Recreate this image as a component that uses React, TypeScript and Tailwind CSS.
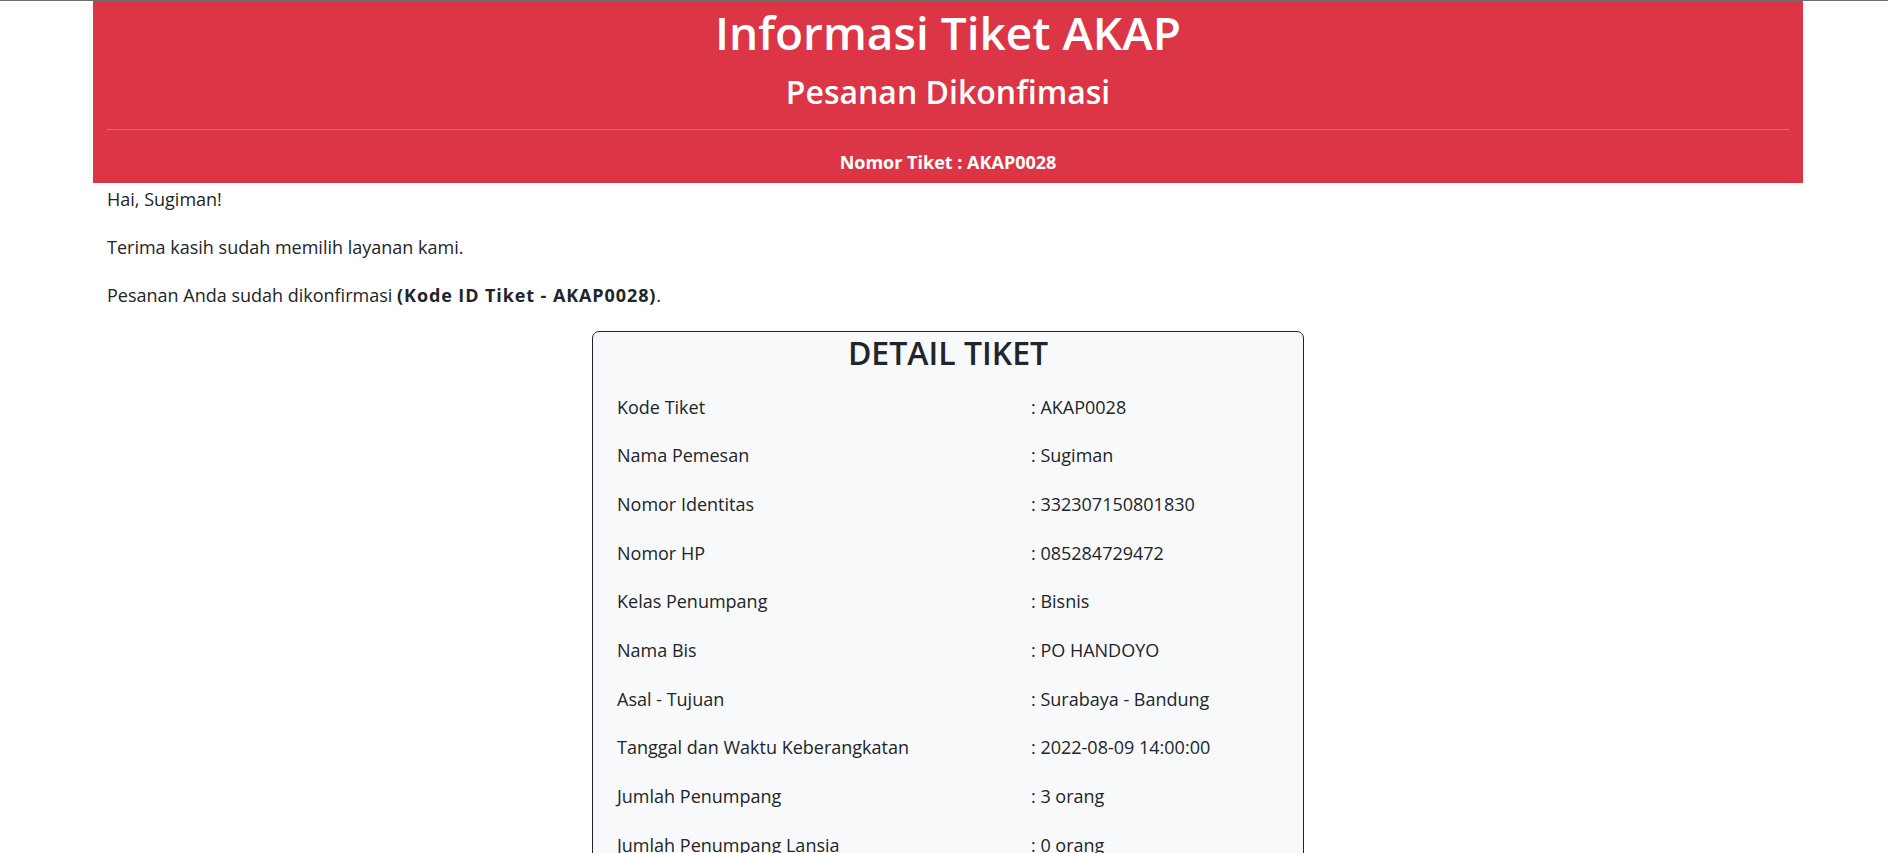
import React from 'react';

const details: [string, string][] = [
  ['Kode Tiket', 'AKAP0028'],
  ['Nama Pemesan', 'Sugiman'],
  ['Nomor Identitas', '332307150801830'],
  ['Nomor HP', '085284729472'],
  ['Kelas Penumpang', 'Bisnis'],
  ['Nama Bis', 'PO HANDOYO'],
  ['Asal - Tujuan', 'Surabaya - Bandung'],
  ['Tanggal dan Waktu Keberangkatan', '2022-08-09 14:00:00'],
  ['Jumlah Penumpang', '3 orang'],
  ['Jumlah Penumpang Lansia', '0 orang'],
];

const App: React.FC = () => {
  return (
    <div className="min-h-screen bg-white text-[#212529] font-['Open_Sans','Noto_Sans',sans-serif]">
      {/* thin window edge */}
      <div className="h-px bg-[#6e6e6e]" />

      <div className="ml-[93px] w-[1710px]">
        {/* Header */}
        <div className="bg-[#dc3545] px-[14px] pt-[3px] pb-[7px] text-center text-white">
          <h1 className="text-[46px] leading-[56px] font-semibold">Informasi Tiket AKAP</h1>
          <h2 className="mt-[10px] text-[32px] leading-[44px] font-semibold">Pesanan Dikonfimasi</h2>
          <div className="mt-[15px] h-px bg-[#e56874]" />
          <p className="mt-[18px] text-[18px] leading-[28px] font-bold">Nomor Tiket : AKAP0028</p>
        </div>

        {/* Body */}
        <div className="px-[14px] pt-[2px] text-[18px] leading-[29px]">
          <p className="mb-[19px]">Hai, Sugiman!</p>
          <p className="mb-[19px]">Terima kasih sudah memilih layanan kami.</p>
          <p className="mb-[21px]">
            Pesanan Anda sudah dikonfirmasi{' '}
            <span className="font-bold tracking-[0.9px]">(Kode ID Tiket - AKAP0028)</span>.
          </p>

          <div className="mx-auto w-[712px] rounded-[7px] border border-[#212529] bg-[#f8f9fa] pt-[1px] pb-[24px]">
            <h3 className="text-center text-[32px] leading-[40px] font-semibold">DETAIL TIKET</h3>
            <div className="mt-[19.5px] pl-[24px]">
              {details.map(([label, value]) => (
                <div key={label} className="grid grid-cols-[414px_1fr] mb-[19.7px] leading-[29px]">
                  <span>{label}</span>
                  <span>: {value}</span>
                </div>
              ))}
            </div>
          </div>
        </div>
      </div>
    </div>
  );
};

export default App;
